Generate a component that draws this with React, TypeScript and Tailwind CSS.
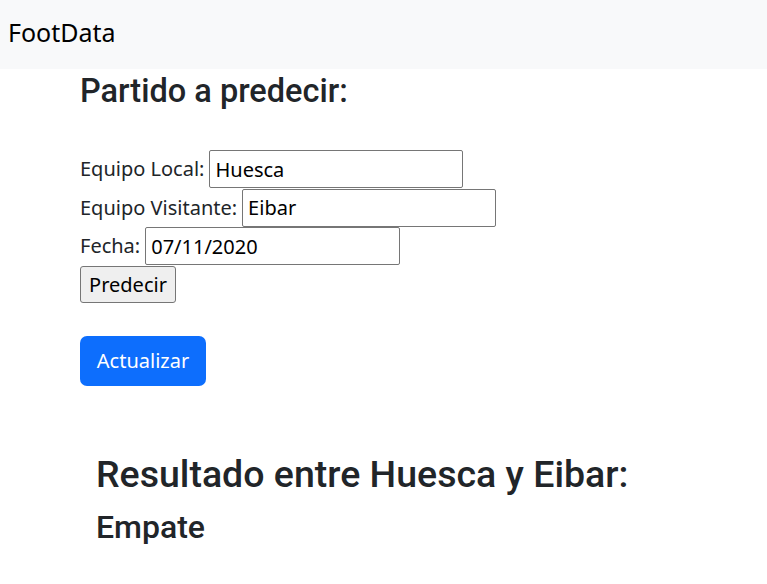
import { useState } from "react";

const fontStack = { fontFamily: '"Noto Sans", "Open Sans", sans-serif' };
const headingFont = { fontFamily: 'Roboto, "Noto Sans", sans-serif' };

function Field({ label, value, onChange, width }: { label: string; value: string; onChange: (v: string) => void; width: string }) {
  return (
    <div className="flex h-[38.5px] items-center">
      <label className="text-[20px] leading-[30px] text-[#212529]">{label}</label>
      <input
        type="text"
        value={value}
        onChange={(e) => onChange(e.target.value)}
        className={`ml-[5px] h-[38px] ${width} rounded-[2px] border border-[#767676] bg-white px-[5px] text-[20px] text-black outline-none`}
      />
    </div>
  );
}

export default function App() {
  const [local, setLocal] = useState("Huesca");
  const [visitante, setVisitante] = useState("Eibar");
  const [fecha, setFecha] = useState("07/11/2020");

  return (
    <div className="min-h-[584px] bg-white text-[#212529]" style={fontStack}>
      <nav className="flex h-[69px] items-center bg-[#f8f9fa] px-[8px] pb-[4px]">
        <span className="text-[25px] leading-[37px] text-black">FootData</span>
      </nav>

      <div className="pl-[80px]">
        <h2 className="mt-[1.5px] text-[32.5px] font-medium leading-[40px]" style={headingFont}>
          Partido a predecir:
        </h2>

        <form className="mt-[39.5px] flex flex-col" onSubmit={(e) => e.preventDefault()}>
          <Field label="Equipo Local:" value={local} onChange={setLocal} width="w-[254px]" />
          <Field label="Equipo Visitante:" value={visitante} onChange={setVisitante} width="w-[254px]" />
          <Field label="Fecha:" value={fecha} onChange={setFecha} width="w-[255px]" />
          <div className="flex h-[38px] items-center">
            <button
              type="submit"
              className="h-[37px] w-[96px] rounded-[3px] border border-[#767676] bg-[#efefef] text-[20px] text-black"
            >
              Predecir
            </button>
          </div>
        </form>

        <button className="mt-[32px] h-[50px] w-[126px] rounded-[7px] bg-[#0d6efd] text-[20px] text-white">
          Actualizar
        </button>
      </div>

      <div className="mt-[65px] pl-[96px]" style={headingFont}>
        <h1 className="text-[37.5px] font-medium leading-[47px]">
          Resultado entre {local} y {visitante}:
        </h1>
        <h3 className="mt-[11px] text-[32px] font-medium leading-[36px]">Empate</h3>
      </div>
    </div>
  );
}
